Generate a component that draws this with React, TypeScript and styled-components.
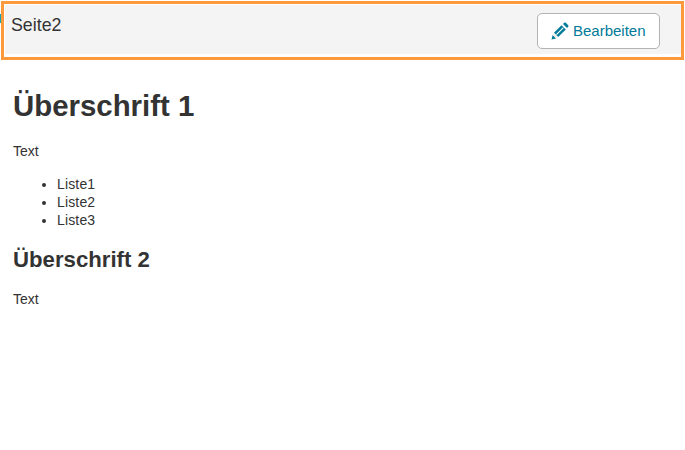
import React from "react";
import styled, { createGlobalStyle } from "styled-components";

const Global = createGlobalStyle`
  html, body { margin: 0; padding: 0; background: #fff; }
  body { font-family: "Liberation Sans", Arial, sans-serif; font-size: 14px; line-height: 18px; color: #333; }
`;

const Page = styled.div`
  position: relative;
  width: 685px;
  height: 450px;
  overflow: hidden;
  padding-top: 1px;
  box-sizing: border-box;
`;

const Marker = styled.span`
  position: absolute;
  left: 0;
  top: 14px;
  width: 1px;
  height: 9px;
  background: #12a5b5;
`;

const Frame = styled.header`
  box-sizing: border-box;
  width: 683px;
  height: 59px;
  margin-left: 1px;
  border: 3px solid #ff9a3c;
  padding: 1px 0 3px 1px;
`;

const Bar = styled.div`
  height: 100%;
  background: #f4f4f4;
  display: flex;
  justify-content: space-between;
  align-items: flex-start;
  padding: 0 21px 0 6px;
`;

const Title = styled.h2`
  margin: 10px 0 0;
  font-size: 17.8px;
  line-height: 20px;
  font-weight: 400;
  color: #333;
`;

const EditButton = styled.button`
  display: flex;
  align-items: center;
  gap: 4px;
  box-sizing: border-box;
  width: 123px;
  height: 36px;
  margin-top: 8px;
  padding: 0 0 0 13px;
  background: #fff;
  border: 1px solid #b3b3b3;
  border-radius: 5px;
  color: #007a99;
  font: 15px/18px "Liberation Sans", Arial, sans-serif;
`;

const Content = styled.main`
  padding: 0 13px;
`;

const H1 = styled.h1`
  margin: 29px 0 0;
  font-size: 29.4px;
  line-height: 33px;
  font-weight: 700;
  color: #333;
`;

const P = styled.p`
  margin: 20px 0 0;
`;

const List = styled.ul`
  margin: 15px 0 0;
  padding: 0 0 0 44px;
`;

const Item = styled.li`
  letter-spacing: 0.15px;
`;

const H2 = styled.h2`
  margin: 21px 0 0;
  font-size: 22.2px;
  line-height: 20px;
  font-weight: 700;
  color: #333;
`;

const PencilIcon = () => (
  <svg width="18" height="18" viewBox="0 0 18 18" fill="currentColor" aria-hidden="true">
    <path d="M0.5 17.5 L1.6 13 L5 16.4 Z" />
    <path d="M3 10.8 L10.6 3.2 L14.8 7.4 L7.2 15 Z" />
    <path d="M12 2 L13.2 0.8 Q14 0.2 14.8 0.8 L17.2 3.2 Q17.8 4 17.2 4.8 L16 6 Z" />
    <path d="M5.4 12.6 L12.4 5.6" stroke="#ffffff" strokeWidth="1.2" fill="none" />
    <path d="M2.2 12.4 L5.6 15.8" stroke="#f0dcc8" strokeWidth="1" fill="none" />
  </svg>
);

export default function App() {
  return (
    <Page>
      <Global />
      <Marker />
      <Frame>
        <Bar>
          <Title>Seite2</Title>
          <EditButton>
            <PencilIcon />
            Bearbeiten
          </EditButton>
        </Bar>
      </Frame>
      <Content>
        <H1>Überschrift 1</H1>
        <P>Text</P>
        <List>
          <Item>Liste1</Item>
          <Item>Liste2</Item>
          <Item>Liste3</Item>
        </List>
        <H2>Überschrift 2</H2>
        <P>Text</P>
      </Content>
    </Page>
  );
}
